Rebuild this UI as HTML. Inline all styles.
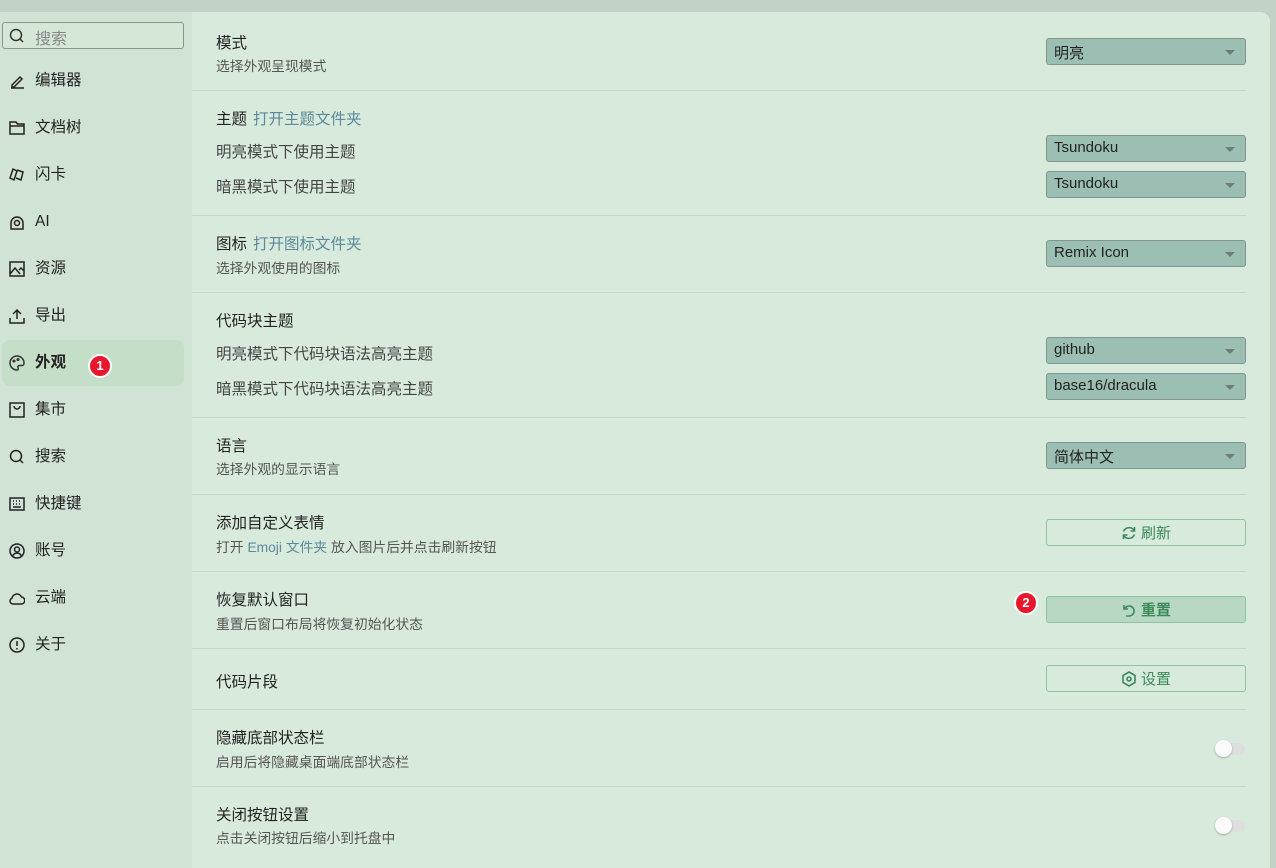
<!DOCTYPE html>
<html><head><meta charset="utf-8"><style>
*{margin:0;padding:0;box-sizing:border-box}
body{width:1276px;height:868px;overflow:hidden;background:#c3d2c6;font-family:"Liberation Sans","Noto Sans CJK SC",sans-serif;position:relative;color:#222}
.side{position:absolute;left:0;top:12px;width:192px;height:856px;background:#d1e3d4}
.main{position:absolute;left:192px;top:12px;width:1078px;height:856px;background:#d8eadb;border-top-right-radius:10px}
.abs{position:absolute}
.search{left:2px;top:22px;width:182px;height:27px;border:1px solid #8a968c;border-radius:3px;background:#d5e8d8;font-size:16px;color:#888;padding:2px 0 0 32px}
.item{position:absolute;left:9px;font-size:15.5px;color:#222;height:20px;line-height:20px}
.item svg{position:absolute;left:0;top:2px}
.item span{position:absolute;left:26px;white-space:nowrap}
.active{left:2px;top:340px;width:182px;height:46px;background:#c5dec8;border-radius:8px}
.badge{width:24px;height:24px;border-radius:50%;background:#e8182c;border:2px solid #fff;color:#fff;font-size:13px;text-align:center;line-height:20px;font-weight:bold}
.t{position:absolute;left:216px;font-size:15.5px;color:#222;white-space:nowrap}
.d{position:absolute;left:216px;font-size:13.8px;color:#555;white-space:nowrap}
.lnk{color:#5c8a9c;margin-left:6px}
.sep{position:absolute;left:192px;width:1054px;height:1px;background:#c4d8c8}
.sel{position:absolute;left:1046px;width:200px;height:27px;background:#9cbfb4;border:1px solid #7f9690;border-radius:3px;font-size:15px;padding:3px 0 0 7px;color:#222}
.sel:after{content:"";position:absolute;right:10px;top:11px;border-left:5px solid transparent;border-right:5px solid transparent;border-top:5px solid #6c7c78}
.btn{position:absolute;left:1046px;width:200px;height:27px;border:1px solid #8cc49c;border-radius:3px;font-size:15px;color:#3a8a5a;display:flex;align-items:center;justify-content:center;gap:4px}
.tog{position:absolute;left:1215px;width:30px;height:12px;border-radius:6px;background:#dcdfdd}
.tog:before{content:"";position:absolute;left:0;top:-3px;width:17px;height:17px;border-radius:50%;background:#fafafa;box-shadow:0 1px 2px rgba(0,0,0,.25)}
</style></head><body>
<div class="side"></div>
<div class="main"></div>
<div class="abs search">搜索</div>
<svg class="abs" style="left:9px;top:28px" width="16" height="16" viewBox="0 0 16 16" fill="none" stroke="#333" stroke-width="1.5"><circle cx="7" cy="7" r="5.5"/><path d="M11 11l3 3"/></svg>
<div class="abs active"></div>
<div class="item" style="top:71px"><svg width="16" height="16" viewBox="0 0 16 16" fill="none" stroke="#222" stroke-width="1.5"><path d="M2 15h13M3 12l8-8 2 2-8 8H3z"/></svg><span>编辑器</span></div>
<div class="item" style="top:118px"><svg width="16" height="16" viewBox="0 0 16 16" fill="none" stroke="#222" stroke-width="1.5"><path d="M1 2h6l1.5 2H15v10H1zM1 6h14"/></svg><span>文档树</span></div>
<div class="item" style="top:165px"><svg width="16" height="16" viewBox="0 0 16 16" fill="none" stroke="#222" stroke-width="1.5"><path d="M1 11l3-9 4 2-3 9zM8 3l6 2-2 8-5-2"/></svg><span>闪卡</span></div>
<div class="item" style="top:212px"><svg width="16" height="16" viewBox="0 0 16 16" fill="none" stroke="#222" stroke-width="1.5"><path d="M2 15V9a6 6 0 0112 0v6z"/><circle cx="8" cy="9" r="2.5"/></svg><span>AI</span></div>
<div class="item" style="top:259px"><svg width="16" height="16" viewBox="0 0 16 16" fill="none" stroke="#222" stroke-width="1.5"><path d="M1 1h14v14H1zM1 13l5-6 5 6M10 9l2-2 3 3"/></svg><span>资源</span></div>
<div class="item" style="top:306px"><svg width="16" height="16" viewBox="0 0 16 16" fill="none" stroke="#222" stroke-width="1.5"><path d="M1 10v5h14v-5M8 11V2M4 6l4-4 4 4"/></svg><span>导出</span></div>
<div class="item" style="top:353px;font-weight:bold"><svg width="16" height="16" viewBox="0 0 16 16" fill="none" stroke="#333" stroke-width="1.5"><path d="M8 1a7 7 0 100 14c1.5 0 1.5-1.5 1-2.5s0-2 1.5-2H13a2 2 0 002-2A7 7 0 008 1z"/><circle cx="5" cy="6" r=".8"/><circle cx="9" cy="4.5" r=".8"/></svg><span>外观</span></div>
<div class="abs badge" style="left:88px;top:354px">1</div>
<div class="item" style="top:400px"><svg width="16" height="16" viewBox="0 0 16 16" fill="none" stroke="#222" stroke-width="1.5"><path d="M1 1h14v14H1zM5 4a3 3 0 006 0"/></svg><span>集市</span></div>
<div class="item" style="top:447px"><svg width="16" height="16" viewBox="0 0 16 16" fill="none" stroke="#222" stroke-width="1.5"><circle cx="7" cy="7" r="5.5"/><path d="M11 11l3 3"/></svg><span>搜索</span></div>
<div class="item" style="top:494px"><svg width="16" height="16" viewBox="0 0 16 16" fill="none" stroke="#222" stroke-width="1.5"><path d="M1 2h14v12H1zM4 5h1M7 5h1M10 5h1M4 8h1M7 8h1M10 8h1M4 11h8"/></svg><span>快捷键</span></div>
<div class="item" style="top:541px"><svg width="16" height="16" viewBox="0 0 16 16" fill="none" stroke="#222" stroke-width="1.5"><circle cx="8" cy="8" r="7"/><circle cx="8" cy="6.5" r="2.5"/><path d="M3.5 13a5 5 0 019 0"/></svg><span>账号</span></div>
<div class="item" style="top:588px"><svg width="16" height="16" viewBox="0 0 16 16" fill="none" stroke="#222" stroke-width="1.5"><path d="M4 14a3 3 0 01-1-5.8A5 5 0 0112.5 7 3.5 3.5 0 0112 14z"/></svg><span>云端</span></div>
<div class="item" style="top:635px"><svg width="16" height="16" viewBox="0 0 16 16" fill="none" stroke="#222" stroke-width="1.5"><circle cx="8" cy="8" r="7"/><path d="M8 4v5M8 11v1.5"/></svg><span>关于</span></div>

<div class="t" style="top:31px">模式</div><div class="d" style="top:55px">选择外观呈现模式</div>
<div class="sel" style="top:38px">明亮</div>
<div class="sep" style="top:90px"></div>
<div class="t" style="top:107px">主题<span class="lnk">打开主题文件夹</span></div>
<div class="t" style="top:140px;color:#444">明亮模式下使用主题</div><div class="sel" style="top:135px">Tsundoku</div>
<div class="t" style="top:175px;color:#444">暗黑模式下使用主题</div><div class="sel" style="top:171px">Tsundoku</div>
<div class="sep" style="top:215px"></div>
<div class="t" style="top:232px">图标<span class="lnk">打开图标文件夹</span></div><div class="d" style="top:257px">选择外观使用的图标</div>
<div class="sel" style="top:240px">Remix Icon</div>
<div class="sep" style="top:292px"></div>
<div class="t" style="top:309px">代码块主题</div>
<div class="t" style="top:342px;color:#444">明亮模式下代码块语法高亮主题</div><div class="sel" style="top:337px">github</div>
<div class="t" style="top:377px;color:#444">暗黑模式下代码块语法高亮主题</div><div class="sel" style="top:373px">base16/dracula</div>
<div class="sep" style="top:417px"></div>
<div class="t" style="top:434px">语言</div><div class="d" style="top:458px">选择外观的显示语言</div>
<div class="sel" style="top:442px">简体中文</div>
<div class="sep" style="top:494px"></div>
<div class="t" style="top:511px">添加自定义表情</div><div class="d" style="top:536px">打开 <span style="color:#5c8a9c">Emoji 文件夹</span> 放入图片后并点击刷新按钮</div>
<div class="btn" style="top:519px"><svg width="16" height="16" viewBox="0 0 16 16" fill="none" stroke="#3a8a5a" stroke-width="1.6"><path d="M2.5 6.5A6 6 0 0113.5 6M13.5 9.5A6 6 0 012.5 10M13.5 2v4h-4M2.5 14v-4h4"/></svg>刷新</div>
<div class="sep" style="top:571px"></div>
<div class="t" style="top:588px">恢复默认窗口</div><div class="d" style="top:613px">重置后窗口布局将恢复初始化状态</div>
<div class="abs badge" style="left:1014px;top:591px">2</div>
<div class="btn" style="top:596px;background:#b8d8c4;font-weight:bold"><svg width="16" height="16" viewBox="0 0 16 16" fill="none" stroke="#3a8a5a" stroke-width="1.6"><path d="M3 3v4h4M3.5 7A5 5 0 118 14H5"/></svg>重置</div>
<div class="sep" style="top:648px"></div>
<div class="t" style="top:670px">代码片段</div>
<div class="btn" style="top:665px"><svg width="16" height="16" viewBox="0 0 16 16" fill="none" stroke="#3a8a5a" stroke-width="1.6"><path d="M8 1l6 3.5v7L8 15l-6-3.5v-7z"/><circle cx="8" cy="8" r="2"/></svg>设置</div>
<div class="sep" style="top:709px"></div>
<div class="t" style="top:726px">隐藏底部状态栏</div><div class="d" style="top:751px">启用后将隐藏桌面端底部状态栏</div>
<div class="tog" style="top:743px"></div>
<div class="sep" style="top:786px"></div>
<div class="t" style="top:803px">关闭按钮设置</div><div class="d" style="top:827px">点击关闭按钮后缩小到托盘中</div>
<div class="tog" style="top:820px"></div>
</body></html>
